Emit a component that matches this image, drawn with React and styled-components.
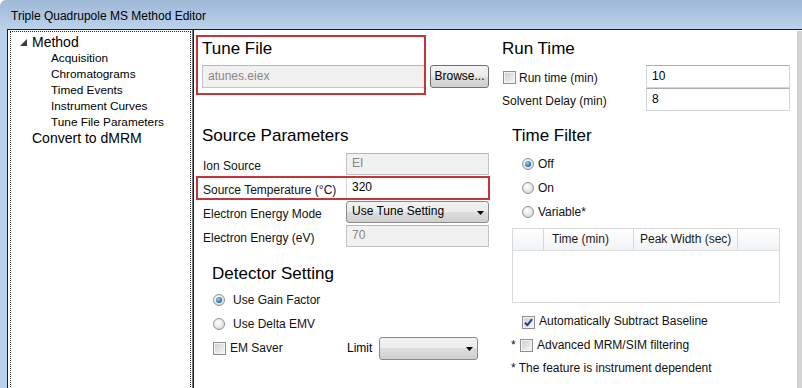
import React from "react";
import styled, { createGlobalStyle, css } from "styled-components";

const SMALL = "12px";

const GlobalStyle = createGlobalStyle`
  * { box-sizing: border-box; }
  html, body { margin: 0; padding: 0; background: #fff; }
  body { font-family: "Liberation Sans", Arial, sans-serif; color: #000; }
`;

const Window = styled.div`
  width: 802px;
  height: 388px;
  overflow: hidden;
  display: flex;
  flex-direction: column;
  background: #fff;
`;

const TitleBar = styled.div`
  flex: none;
  height: 29px;
  padding: 4px 0 0 11px;
  line-height: 25px;
  font-size: 12px;
  color: #000;
  background: linear-gradient(#9db7d6, #bcd2eb);
  border-top-left-radius: 6px;
`;

const Body = styled.div`
  flex: 1;
  display: flex;
  min-height: 0;
`;

const Frame = styled.div`
  flex: none;
  width: 7px;
  background: #b9d1ea;
`;

const Client = styled.div`
  flex: 1;
  display: flex;
  min-width: 0;
  background: #fff;
  border-top: 1px solid #1e1e1e;
  border-left: 1px solid #1e1e1e;
`;

const TreePane = styled.div`
  flex: none;
  width: 184px;
  padding: 1px 1px 0 2px;
`;

const TreeBox = styled.div`
  height: 420px;
  border: 1px dotted #2a2a2a;
  padding-top: 2px;
`;

const TreeRow = styled.div`
  display: flex;
  align-items: center;
  height: 16px;
  line-height: 16px;
  white-space: nowrap;
  padding-left: ${(p) => p.$indent}px;
  font-size: ${(p) => (p.$level === 0 ? "14px" : "11.8px")};
`;

const Toggle = styled.svg`
  flex: none;
  width: 7px;
  height: 7px;
  margin-right: 5px;
`;

const Splitter = styled.div`
  flex: none;
  width: 2px;
  background: linear-gradient(to right, #7a7a7a 50%, #1e1e1e 50%);
`;

const Content = styled.div`
  flex: 1;
  display: grid;
  grid-template-columns: 302px 1fr;
  min-width: 0;
`;

const Column = styled.div`
  display: flex;
  flex-direction: column;
  align-items: flex-start;
`;

const ScrollStrip = styled.div`
  flex: none;
  width: 5px;
  margin-top: 1px;
  background: #d4d4d4;
`;

const Heading = styled.div`
  height: 20px;
  line-height: 20px;
  font-size: 17px;
  white-space: nowrap;
  margin-top: ${(p) => p.$top || 0}px;
  margin-left: ${(p) => p.$left || 0}px;
`;

const TuneRow = styled.div`
  display: flex;
  align-items: flex-end;
  margin: 5px 0 0 2px;
`;

const Highlight = styled.div`
  width: 230px;
  height: 60px;
  border: 2px solid #c3343b;
  padding: 2px 0 0 4px;
  overflow: hidden;
  display: flex;
  flex-direction: column;
  align-items: flex-start;
`;

const Field = styled.div`
  flex: none;
  height: ${(p) => p.$height || 22}px;
  width: ${(p) => (p.$width ? `${p.$width}px` : "100%")};
  margin-top: ${(p) => p.$top || 0}px;
  padding: 0 0 2px 5px;
  display: flex;
  align-items: center;
  font-size: ${SMALL};
  white-space: nowrap;
  border: 1px solid ${(p) => (p.$disabled ? "#c4c4c4" : "#d2d5d9")};
  border-top-color: ${(p) => (p.$disabled ? "#b9b9b9" : "#abadb3")};
  background: ${(p) => (p.$disabled ? "#f1f1f1" : "#fff")};
  color: ${(p) => (p.$disabled ? "#868686" : "#000")};
`;

const winButtonFace = css`
  border: 1px solid #707070;
  border-radius: 3px;
  background: linear-gradient(#f2f2f2 0%, #ebebeb 50%, #dddddd 50%, #cfcfcf 100%);
`;

const Button = styled.button`
  ${winButtonFace};
  flex: none;
  width: 59px;
  height: 23px;
  margin: 0 0 7px 4px;
  padding: 0 0 1px;
  font: ${SMALL} "Liberation Sans", Arial, sans-serif;
  color: #000;
`;

const Form = styled.div`
  margin: 6px 0 0 2px;
  width: 294px;
  display: flex;
  flex-direction: column;
`;

const FormRow = styled.div`
  display: grid;
  grid-template-columns: 150px 143px;
  align-items: center;
  height: 24px;
  ${(p) =>
    p.$highlight &&
    css`
      outline: 2px solid #c3343b;
      outline-offset: -2px;
    `}
`;

const Label = styled.div`
  font-size: ${SMALL};
  padding: 3px 0 0 ${(p) => p.$pad ?? 7}px;
  white-space: nowrap;
  color: #111;
`;

const Combo = styled.div`
  ${winButtonFace};
  height: ${(p) => p.$height || 22}px;
  width: ${(p) => (p.$width ? `${p.$width}px` : "100%")};
  display: flex;
  align-items: center;
  justify-content: space-between;
  padding: 0 4px 2px 5px;
  font-size: ${SMALL};
  white-space: nowrap;
  border-color: #8a8a8a;
`;

const ComboArrow = styled.svg`
  flex: none;
  width: 7px;
  height: 4px;
  margin-top: 4px;
`;

const Options = styled.div`
  display: flex;
  flex-direction: column;
  margin-top: ${(p) => p.$top || 0}px;
  margin-left: ${(p) => p.$left || 0}px;
`;

const OptionRow = styled.div`
  display: flex;
  align-items: center;
  height: ${(p) => p.$height || 24}px;
  font-size: ${SMALL};
  white-space: nowrap;
`;

const OptionText = styled.span`
  margin-left: ${(p) => p.$gap || 4}px;
  color: #111;
`;

const Radio = styled.span`
  position: relative;
  flex: none;
  width: 12px;
  height: 12px;
  border-radius: 50%;
  border: 1px solid #929292;
  background: radial-gradient(circle at 40% 35%, #ffffff, #e6e6e6 55%, #cfcfcf);
  ${(p) =>
    p.$checked &&
    css`
      &::after {
        content: "";
        position: absolute;
        left: 2px;
        top: 2px;
        width: 6px;
        height: 6px;
        border-radius: 50%;
        background: radial-gradient(circle at 40% 35%, #9bd8f7, #2b7fc0 55%, #114a85);
      }
    `}
`;

const CheckBox = styled.span`
  flex: none;
  width: 13px;
  height: 13px;
  border: 1px solid #8e8f8f;
  box-shadow: inset 0 0 0 1px #f4f4f4;
  background: linear-gradient(135deg, #cdcdcd, #f8f8f8);
  display: inline-flex;
  align-items: center;
  justify-content: center;
  margin-top: ${(p) => p.$shift || 0}px;
  margin-left: ${(p) => p.$left || 0}px;
`;

const Check = styled.svg`
  width: 9px;
  height: 9px;
`;

const LimitGroup = styled.div`
  display: flex;
  align-items: center;
  margin-left: auto;
  gap: 7px;
`;

const DetectorRow = styled.div`
  display: grid;
  grid-template-columns: 134px auto;
  align-items: center;
  height: 24px;
  font-size: ${SMALL};
  white-space: nowrap;
`;

const CheckLabel = styled.div`
  display: flex;
  align-items: center;
  font-size: ${SMALL};
  white-space: nowrap;
  padding-top: ${(p) => p.$shift || 0}px;
`;

const RunGrid = styled.div`
  display: grid;
  grid-template-columns: 144px 144px;
  grid-auto-rows: 23px;
  align-items: center;
  margin: 6px 0 0 6px;
`;

const Table = styled.div`
  margin: 4px 0 0 16px;
  width: 268px;
  height: 75px;
  border: 1px solid #d6d9dd;
  background: #fff;
`;

const TableHead = styled.div`
  display: grid;
  grid-template-columns: 31px 90px 104px 1fr;
  height: 22px;
  background: linear-gradient(#ffffff, #f2f3f5);
  border-bottom: 1px solid #dcdfe3;
`;

const HeadCell = styled.div`
  font-size: ${SMALL};
  line-height: 20px;
  padding-left: ${(p) => p.$pad || 0}px;
  color: #1a1a1a;
  white-space: nowrap;
  border-right: ${(p) => (p.$last ? "none" : "1px solid #d5d8dc")};
`;

const Note = styled.div`
  height: 25px;
  line-height: 25px;
  margin-left: 15px;
  font-size: ${SMALL};
  color: #111;
  white-space: nowrap;
`;

const Star = styled.span`
  width: 9px;
  color: #111;
`;

function Arrow() {
  return (
    <ComboArrow viewBox="0 0 7 4">
      <polygon points="0,0 7,0 3.5,4" fill="#000" />
    </ComboArrow>
  );
}

function Tick() {
  return (
    <Check viewBox="0 0 9 9">
      <path d="M1 4.6 L3.4 7.2 L8 1.2" fill="none" stroke="#253f8e" strokeWidth="2" strokeLinejoin="round" />
    </Check>
  );
}

const treeItems = [
  { label: "Acquisition" },
  { label: "Chromatograms" },
  { label: "Timed Events" },
  { label: "Instrument Curves" },
  { label: "Tune File Parameters" },
];

export default function App() {
  return (
    <>
      <GlobalStyle />
      <Window>
        <TitleBar>Triple Quadrupole MS Method Editor</TitleBar>
        <Body>
          <Frame />
          <Client>
            <TreePane>
              <TreeBox>
                <TreeRow $level={0} $indent={9}>
                  <Toggle viewBox="0 0 7 7">
                    <polygon points="7,0 7,7 0,7" fill="#3c3c3c" />
                  </Toggle>
                  Method
                </TreeRow>
                {treeItems.map((it) => (
                  <TreeRow key={it.label} $level={1} $indent={40}>
                    {it.label}
                  </TreeRow>
                ))}
                <TreeRow $level={0} $indent={21}>
                  Convert to dMRM
                </TreeRow>
              </TreeBox>
            </TreePane>
            <Splitter />
            <Content>
              <Column>
                <TuneRow>
                  <Highlight>
                    <Heading>Tune File</Heading>
                    <Field $disabled $width={260} $height={23} $top={6}>
                      atunes.eiex
                    </Field>
                  </Highlight>
                  <Button>Browse...</Button>
                </TuneRow>

                <Heading $top={31} $left={8}>Source Parameters</Heading>
                <Form>
                  <FormRow>
                    <Label>Ion Source</Label>
                    <Field $disabled>EI</Field>
                  </FormRow>
                  <FormRow $highlight>
                    <Label>Source Temperature (°C)</Label>
                    <Field>320</Field>
                  </FormRow>
                  <FormRow>
                    <Label>Electron Energy Mode</Label>
                    <Combo>
                      Use Tune Setting
                      <Arrow />
                    </Combo>
                  </FormRow>
                  <FormRow>
                    <Label>Electron Energy (eV)</Label>
                    <Field $disabled>70</Field>
                  </FormRow>
                </Form>

                <Heading $top={16} $left={18}>Detector Setting</Heading>
                <Options $top={4} $left={19}>
                  <OptionRow>
                    <Radio $checked />
                    <OptionText $gap={8}>Use Gain Factor</OptionText>
                  </OptionRow>
                  <OptionRow>
                    <Radio />
                    <OptionText $gap={8}>Use Delta EMV</OptionText>
                  </OptionRow>
                  <DetectorRow>
                    <CheckLabel>
                      <CheckBox />
                      <OptionText $gap={4}>EM Saver</OptionText>
                    </CheckLabel>
                    <LimitGroup>
                      <span>Limit</span>
                      <Combo $width={99} $height={23}>
                        <span />
                        <Arrow />
                      </Combo>
                    </LimitGroup>
                  </DetectorRow>
                </Options>
              </Column>

              <Column>
                <Heading $top={9} $left={6}>Run Time</Heading>
                <RunGrid>
                  <CheckLabel $shift={3}>
                    <CheckBox $shift={-1} $left={1} />
                    <OptionText $gap={3}>Run time (min)</OptionText>
                  </CheckLabel>
                  <Field $height={23}>10</Field>
                  <Label $pad={0}>Solvent Delay (min)</Label>
                  <Field $height={23}>8</Field>
                </RunGrid>

                <Heading $top={15} $left={16}>Time Filter</Heading>
                <Options $top={6} $left={26}>
                  <OptionRow>
                    <Radio $checked />
                    <OptionText>Off</OptionText>
                  </OptionRow>
                  <OptionRow>
                    <Radio />
                    <OptionText>On</OptionText>
                  </OptionRow>
                  <OptionRow>
                    <Radio />
                    <OptionText>Variable*</OptionText>
                  </OptionRow>
                </Options>

                <Table>
                  <TableHead>
                    <HeadCell />
                    <HeadCell $pad={8}>Time (min)</HeadCell>
                    <HeadCell $pad={6}>Peak Width (sec)</HeadCell>
                    <HeadCell $last />
                  </TableHead>
                </Table>

                <Options $top={6} $left={26}>
                  <OptionRow>
                    <CheckBox $shift={3}>
                      <Tick />
                    </CheckBox>
                    <OptionText>Automatically Subtract Baseline</OptionText>
                  </OptionRow>
                </Options>
                <Options $left={15}>
                  <OptionRow $height={23}>
                    <Star>*</Star>
                    <CheckBox $shift={2} />
                    <OptionText>Advanced MRM/SIM filtering</OptionText>
                  </OptionRow>
                </Options>
                <Note>* The feature is instrument dependent</Note>
              </Column>
            </Content>
            <ScrollStrip />
          </Client>
        </Body>
      </Window>
    </>
  );
}
